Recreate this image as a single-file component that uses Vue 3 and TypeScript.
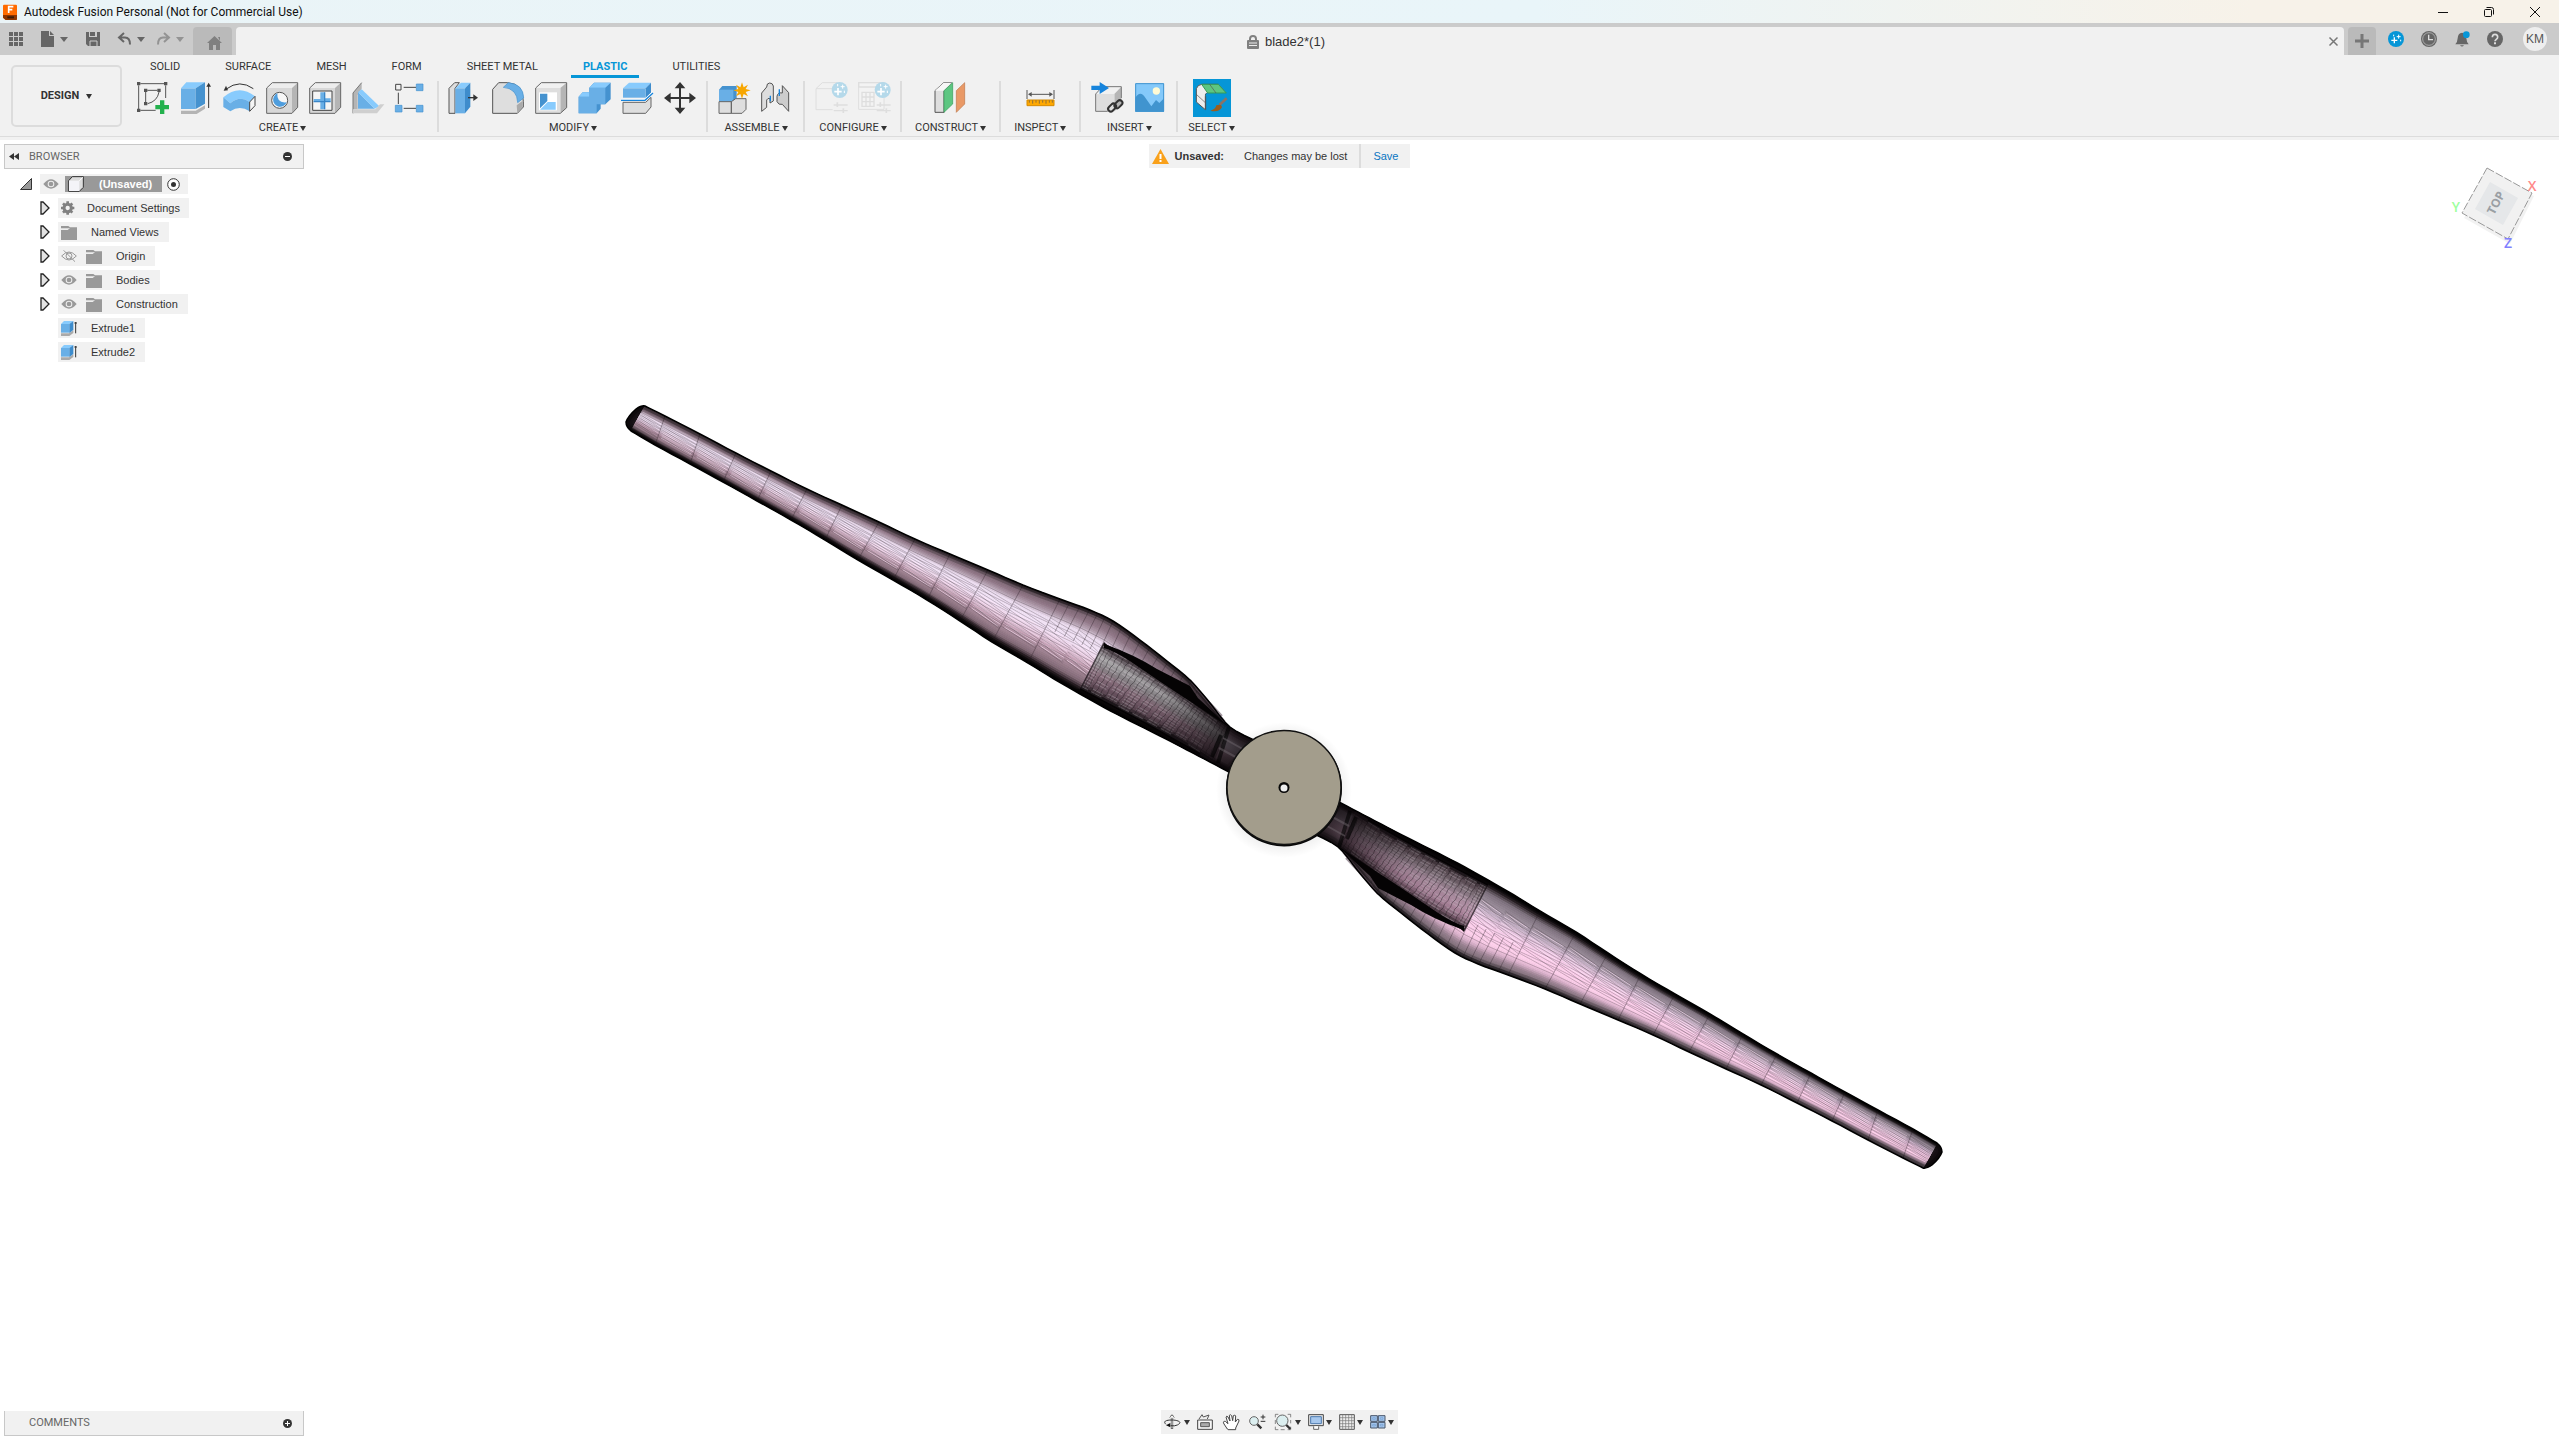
<script setup lang="ts">
interface RibbonGroup {
  label: string
  icons: string[]
  wide?: boolean
  muted?: boolean
}
interface TreeRow {
  label: string
  icons: string[]
  expandable: boolean
}
type Pt = [number, number]
type Stop = [number, string]

const tabs: string[] = ['SOLID', 'SURFACE', 'MESH', 'FORM', 'SHEET METAL', 'PLASTIC', 'UTILITIES']

const groups: RibbonGroup[] = [
  { label: 'CREATE', icons: ['sketch', 'extrude', 'snap', 'boss', 'rest', 'web', 'pattern'] },
  { label: 'MODIFY', icons: ['press', 'fillet', 'shell', 'combine', 'split', 'move'] },
  { label: 'ASSEMBLE', icons: ['component', 'joint'] },
  { label: 'CONFIGURE', icons: ['configModel', 'configTable'], muted: true },
  { label: 'CONSTRUCT', icons: ['plane'], wide: true },
  { label: 'INSPECT', icons: ['measure'], wide: true },
  { label: 'INSERT', icons: ['derive', 'image'] },
  { label: 'SELECT', icons: ['select'] },
]

const rows: TreeRow[] = [
  { label: 'Document Settings', icons: ['gear'], expandable: true },
  { label: 'Named Views', icons: ['folder'], expandable: true },
  { label: 'Origin', icons: ['eyeOff', 'folder'], expandable: true },
  { label: 'Bodies', icons: ['eye', 'folder'], expandable: true },
  { label: 'Construction', icons: ['eye', 'folder'], expandable: true },
  { label: 'Extrude1', icons: ['extrudeSmall'], expandable: false },
  { label: 'Extrude2', icons: ['extrudeSmall'], expandable: false },
]

const navTools: { icon: string; label: string; menu: boolean }[] = [
  { icon: 'orbit', label: 'Orbit', menu: true },
  { icon: 'look', label: 'Look at', menu: false },
  { icon: 'pan', label: 'Pan', menu: false },
  { icon: 'zoom', label: 'Zoom', menu: false },
  { icon: 'fit', label: 'Fit', menu: true },
  { icon: 'display', label: 'Display settings', menu: true },
  { icon: 'grid', label: 'Grid and snaps', menu: true },
  { icon: 'views', label: 'Viewports', menu: true },
]

const sparkle = (x: number, y: number) =>
  `<circle cx="${x}" cy="${y}" r="24" fill="#b5d9ea"/><path d="M${x - 5} ${y - 6}v22M${x - 16} ${y + 5}h22" stroke="#fff" stroke-width="5"/><path d="M${x + 9} ${y - 16}v12M${x + 3} ${y - 10}h12M${x - 6} ${y - 18}v7M${x + 14} ${y + 2}v7" stroke="#fff" stroke-width="3"/>`
const sliders = '<path d="M56 72h42M56 89h42" stroke="#dedede" stroke-width="4"/><path d="M67 64v14M85 82v14" stroke="#dedede" stroke-width="5"/>'

const big: Record<string, string> = {
  sketch:
    '<g fill="none" stroke="#555" stroke-width="3"><path d="M10 8h71M5 13v71M86 13v38M10 88h46M26 33v31M31 28h30M66 33q-5 28-34 35"/></g><g fill="#555"><path d="M0 3h10v10H0zM81 3h10v10H81zM0 83h10v10H0zM21 23h10v10H21zM61 23h10v10H61zM21 63h10v10H21z"/></g><path d="M69 58h13v14h14v13H82v14H69V85H55V72h14z" fill="#23b14d"/>',
  extrude:
    '<path d="M3 89h44l28-16v10L50 99H3z" fill="#b4b4b4"/><path d="M3 22h44v62H3z" fill="#69afe6"/><path d="M3 22 19 4h56L47 22z" fill="#88cbfd"/><path d="M47 22 75 4v64L47 84z" fill="#4592cf"/><path d="M86 81V12" stroke="#333" stroke-width="3"/><path d="M79 17h14L86 5z" fill="#333"/>',
  snap:
    '<path d="M10 24Q50-6 91 23" fill="none" stroke="#333" stroke-width="3"/><path d="m2 29 13-1-6-14z" fill="#333"/><path d="M1 49Q48 8 96 46L80 63Q50 42 22 67z" fill="#88cbfd"/><path d="M1 49 22 67v24L1 78zM22 67q28-25 58-4v28q-30-20-58 0z" fill="#69afe6"/><path d="M80 63 96 46v28L80 91z" fill="#f5f5f5" stroke="#444" stroke-width="3"/>',
  boss:
    '<path d="M2 21 19 5h76L78 21z" fill="#ededed"/><path d="M78 21 95 5v74L78 97z" fill="#b5b5b5"/><path d="M2 21h76v76H2z" fill="#d8d8d8"/><path d="M2 97V21L19 5h76v74L78 97z" fill="none" stroke="#666" stroke-width="3"/><circle cx="41" cy="58" r="24" fill="#f7f7f7" stroke="#555" stroke-width="3"/><path d="M34 37q-2 31 28 27a21 21 0 1 1-28-27" fill="#4e9ddd"/>',
  rest:
    '<path d="M2 21 19 5h76L78 21z" fill="#ededed"/><path d="M78 21 95 5v74L78 97z" fill="#b5b5b5"/><path d="M2 21h76v76H2z" fill="#d8d8d8"/><path d="M2 97V21L19 5h76v74L78 97z" fill="none" stroke="#666" stroke-width="3"/><path d="M11 30h58v58H11z" fill="#f5f5f5" stroke="#444" stroke-width="3"/><path d="M34 34h13v18h18v9H47v24H34V63H14v-9h20z" fill="#69afe6"/><path d="M47 34v51M14 62h51" stroke="#3985c7" stroke-width="4"/>',
  web:
    '<path d="M3 36 29 5v18L17 42v43H3z" fill="#b5b5b5"/><path d="M3 97V36L29 5" fill="none" stroke="#777" stroke-width="3"/><path d="M18 33v50h50z" fill="#69afe6"/><path d="m18 33 11-8 53 51-14 7z" fill="#88cbfd"/><path d="M3 97V85h67l14-15h13L75 97z" fill="#cfcfcf"/>',
  pattern:
    '<g fill="none" stroke="#444" stroke-width="3"><path d="M2 10h16v17H2zM26 19h37M10 35v34M26 82h37"/></g><path d="M64 9h20v20H64zM1 73h20v20H1zM64 73h20v20H64z" fill="#69afe6" stroke="#4592cf" stroke-width="2"/>',
  press:
    '<path d="M0 22 17 5h14L18 22v75H0z" fill="#dedede" stroke="#555" stroke-width="3"/><path d="M19 22 36 5h28L48 22z" fill="#88cbfd"/><path d="M48 22 64 5v72L48 97z" fill="#3e8ccc"/><path d="M19 22h29v75H19z" fill="#69afe6"/><path d="M57 50h20" stroke="#333" stroke-width="4"/><path d="m73 40 14 10-14 10z" fill="#333"/>',
  fillet:
    '<path d="M2 97V25L20 5h27q47 3 47 56v17L76 97z" fill="#dedede" stroke="#555" stroke-width="3"/><path d="M74 73l18-14v18L76 96z" fill="#aaa"/><path d="M34 19 49 5q45 4 46 46L77 65Q76 23 34 19" fill="#69afe6" stroke="#4592cf" stroke-width="2"/>',
  shell:
    '<path d="M2 21 19 5h76L76 21z" fill="#f1f1f1"/><path d="M76 21 95 5v75L76 97z" fill="#b5b5b5"/><path d="M2 21h74v76H2z" fill="#dedede"/><path d="M2 97V21L19 5h76v75L76 97z" fill="none" stroke="#666" stroke-width="3"/><path d="M12 34h54v54H12z" fill="#fff"/><path d="M15 38h22v22L15 82z" fill="#4592cf"/><path d="M15 86 38 63h24v23z" fill="#88cbfd"/>',
  combine:
    '<path d="M2 47 14 34h20V20L48 5h50v50L82 70H68v13L56 97H2z" fill="#4592cf"/><path d="M2 47h32V20h48v50H56v27H2z" fill="#69afe6"/><path d="m2 47 12-13h20v13zM34 20 48 5h50L82 20z" fill="#88cbfd"/>',
  split:
    '<path d="M6 22 24 5h66L74 22z" fill="#88cbfd"/><path d="m74 22 16-17v31L74 51z" fill="#3e8ccc"/><path d="M6 22h68v28H6z" fill="#69afe6"/><path d="M6 97V64h68l16-15v29L74 97z" fill="#dedede" stroke="#666" stroke-width="3"/><path d="M0 53h71l24-23v7L72 60H0z" fill="#fff"/><path d="M0 58h72l24-22" fill="none" stroke="#1684dc" stroke-width="4"/>',
  move:
    '<path d="M48 15v70M13 51h70" stroke="#333" stroke-width="6"/><path d="m48 3-16 19h32zM48 99 32 80h32zM0 51l20-16v32zM96 51 76 35v32z" fill="#333"/>',
  component:
    '<path d="M3 26 13 15h43v35L46 62H3z" fill="#4592cf"/><path d="M3 26h43v35H3z" fill="#69afe6"/><path d="M3 62h37v35H3zM40 62l13-9h31v32L72 97H40z" fill="#dedede" stroke="#666" stroke-width="3"/><path d="m72 4 5 15 13-8-7 13 15 4-15 5 7 13-13-7-5 14-5-14-13 7 7-13-15-5 15-4-7-13 13 8z" fill="#f7a600"/>',
  joint:
    '<path d="M2 36 17 18q0-12 9-12t11 9v45L27 66V53q-7-3-10 4v22L2 91z" fill="#ddd" stroke="#555" stroke-width="3"/><path d="M83 35 64 14v22q-14-3-16 10v16q5 11 16 8l19 21z" fill="#ccc" stroke="#555" stroke-width="3"/><path d="M28 44v17M55 25v20" stroke="#1684dc" stroke-width="4"/>',
  configModel:
    '<path d="M3 23 22 5h52M3 23v63h50M3 23h50" fill="none" stroke="#dedede" stroke-width="3"/>' + sliders + sparkle(74, 27),
  configTable:
    '<path d="M2 5h76v80H2z" fill="#f3f3f3" stroke="#dedede" stroke-width="3"/><path d="M2 5h76v13H2zM12 34h36v42H12zM24 34v42M36 34v42M12 48h36M12 62h36" fill="none" stroke="#dedede" stroke-width="4"/>' + sliders + sparkle(74, 27),
  plane:
    '<path d="M3 29 29 5h24L30 29v65H3z" fill="#dedede" stroke="#555" stroke-width="3"/><path d="M3 29 29 5h24L30 29z" fill="#f7f7f7"/><path d="M30 29 56 5v64L30 94z" fill="#5dc681" stroke="#339b58" stroke-width="2"/><path d="M67 29 92 5v64L67 94z" fill="#e99966" stroke="#bd7549" stroke-width="2"/>',
  measure:
    '<path d="M9 27v27M90 27v27M17 40h66" stroke="#555" stroke-width="3"/><path d="m12 40 11-7v14zM87 40 76 33v14z" fill="#555"/><path d="M9 57h81v17H9z" fill="#ffa800" stroke="#d58a00" stroke-width="3"/><path d="M16 58v7M26 58v10M36 58v7M46 58v10M56 58v7M66 58v10M76 58v7M85 58v7" stroke="#555" stroke-width="2"/>',
  derive:
    '<path d="M14 39 35 17h56L70 39z" fill="#f1f1f1"/><path d="m70 39 21-22v56L70 91z" fill="#b5b5b5"/><path d="M14 39h56v52H14z" fill="#dedede"/><path d="M14 91V39l20-22h57v34M14 91h36" fill="none" stroke="#777" stroke-width="3"/><path d="M1 14h25V3l28 18-28 18V27H1z" fill="#1684dc"/><g fill="none" stroke="#333" stroke-width="6"><rect x="50" y="72" width="27" height="16" rx="8" transform="rotate(-45 63 80)"/><rect x="69" y="62" width="27" height="16" rx="8" transform="rotate(-45 82 70)"/></g>',
  image:
    '<path d="M4 7h86v85H4z" fill="#84c9fa"/><circle cx="67" cy="30" r="11" fill="#fffbd5"/><path d="M4 50q15-24 30 0l18 26 14-19 10 9 14-14v40H4z" fill="#4094cf"/><path d="M5 8h84v83H5z" fill="none" stroke="#4094cf" stroke-width="3"/>',
  select:
    '<path d="M0 0h114v114H0z" fill="#0696d7"/><path d="M10 29q4-12 16-13h50l22 26H43q-8 0-6 12v38L10 69z" fill="#eee" stroke="#555" stroke-width="3"/><path d="M38 92V54q-2-12 8-12h54v50z" fill="#0696d7"/><path d="M38 92V52" stroke="#555" stroke-width="3"/><path d="m26 16 18 26h56L76 16z" fill="#5dc681" stroke="#339b58" stroke-width="3"/><path d="m50 16 19 26M10 46l27 25" stroke="#555" stroke-width="2"/><path d="M101 58 80 77" stroke="#8b7265" stroke-width="8"/><path d="M52 95q15-3 18-16 16-6 17 6-9 16-35 10" fill="#9b5d1e"/>',
}

const small: Record<string, string> = {
  eye: '<path d="M1 24Q24-4 47 24 24 52 1 24" fill="#999"/><circle cx="24" cy="24" r="10" fill="#eee"/><circle cx="24" cy="24" r="7" fill="#999"/>',
  eyeOff:
    '<path d="M2 24Q24 0 46 24 24 48 2 24" fill="none" stroke="#999" stroke-width="3"/><circle cx="24" cy="24" r="9" fill="none" stroke="#999" stroke-width="3"/><path d="m8 7 34 34" stroke="#999" stroke-width="3"/>',
  folder: '<path d="M0 13V6h22l5 4h21v38H0V18h20l7-5z" fill="#999"/><path d="M2 14h20" stroke="#d5d5d5" stroke-width="2"/>',
  gear:
    '<circle cx="20" cy="24" r="11" fill="none" stroke="#808080" stroke-width="9"/><path d="M20 4v8M20 36v8M0 24h8M32 24h8M6 10l6 6M28 32l6 6M34 10l-6 6M12 32l-6 6" stroke="#808080" stroke-width="8"/>',
  extrudeSmall:
    '<path d="M0 40h24l13-9v8L25 48H0z" fill="#aaa"/><path d="M0 12h25v26H0z" fill="#69afe6"/><path d="M0 12 9 3h28L25 12z" fill="#88cbfd"/><path d="M25 12 37 3v27l-12 9z" fill="#3e8ccc"/><path d="M44 40V6M40 9h8" stroke="#333" stroke-width="3"/>',
  orbit:
    '<path d="M24 3v42" stroke="#555" stroke-width="7"/><path d="M24 7v36" stroke="#ddd" stroke-width="3"/><path d="M17 11 24 2l7 9" fill="#fff" stroke="#444" stroke-width="2"/><path d="M6 31C-6 20 12 18 24 18s36 5 16 15q-8 4-20 2" fill="none" stroke="#333" stroke-width="3"/><path d="m6 34 13-7v13z" fill="#111"/>',
  look: '<path d="m6 15 9-13 4 7 17-6-5 12" fill="#eee" stroke="#555" stroke-width="3"/><path d="M2 18h44v28H2z" fill="#f6f6f6" stroke="#444" stroke-width="3"/><path d="M11 26h26v12H11z" fill="#aaa" stroke="#555" stroke-width="3"/>',
  pan: '<path d="M13 45 3 30q-5-9 4-8l8 7L9 9q2-5 6 0l6 12-2-17q4-4 7 1l3 15 2-15q5-4 7 1l-1 18 6-8q6-1 5 5L38 42v5H15z" fill="#fff" stroke="#444" stroke-width="3"/>',
  zoom: '<circle cx="15" cy="21" r="13" fill="#dceff0" stroke="#666" stroke-width="3"/><path d="m25 31 12 12" stroke="#333" stroke-width="7"/><path d="M42 2v14M35 9h14M35 22h14" stroke="#333" stroke-width="3"/>',
  fit: '<path d="M1 10V1h9M38 1h9v9M47 38v9h-9M10 47H1v-9M1 18v12M47 18v10M17 47h12" fill="none" stroke="#555" stroke-width="2"/><circle cx="22" cy="20" r="17" fill="#dceff0" stroke="#666" stroke-width="3"/><path d="m34 33 12 12" stroke="#333" stroke-width="7"/>',
  display: '<path d="M2 2h44v33H2z" fill="#eee" stroke="#444" stroke-width="3"/><path d="M8 8h32v21H8z" fill="#a7c8ee" stroke="#4c79ae" stroke-width="3"/><path d="M17 37v9h15v-9" fill="#fff" stroke="#666" stroke-width="3"/>',
  grid: '<path d="M2 2h44v44H2z" fill="#eee" stroke="#555" stroke-width="3"/><path d="M11 2v44M20 2v44M29 2v44M38 2v44M2 11h44M2 20h44M2 29h44M2 38h44" stroke="#777" stroke-width="2"/>',
  views: '<path d="M2 5h20v17H2zM25 5h20v17H25zM2 25h20v17H2zM25 25h20v17H25z" fill="#a7c8ee" stroke="#48566b" stroke-width="3"/><path d="M8 11h8v5H8zM31 11h8v5h-8zM8 31h8v5H8zM31 31h8v5h-8z" fill="none" stroke="#6f9bcf" stroke-width="2"/>',
}

/* Propeller blade: stations from tip to root, each with a trailing and a leading edge point. */
const stations: [Pt, Pt][] = [
  [[645, 406], [631, 431]], [[665, 416], [655, 445]], [[700, 434], [690, 464]], [[736, 453], [723, 482]],
  [[771, 471], [757, 501]], [[807, 489], [791, 520]], [[842, 505], [825, 540]], [[879, 522], [858, 560]],
  [[915, 539], [893, 580]], [[950, 554], [927, 600]], [[988, 570], [960, 621]], [[1023, 585], [992, 642]],
  [[1060, 599], [1028, 663]], [[1090, 610], [1054, 679]], [[1113, 621], [1080, 694]], [[1140, 640], [1105, 708]],
  [[1167, 661], [1130, 721]], [[1190, 680], [1160, 736]], [[1210, 703], [1187, 750]], [[1230, 727], [1210, 762]],
  [[1256, 741], [1229, 772]],
]
const pocket: [Pt, Pt][] = [
  [[1104, 643], [1080, 689]], [[1140, 664], [1110, 705]], [[1175, 687], [1145, 723]],
  [[1203, 708], [1180, 742]], [[1230, 728], [1213, 763]],
]

function spline(p: Pt[], u: number): Pt {
  const i = Math.min(Math.floor(u), p.length - 2)
  const t = u - i
  const at = (k: number) => p[Math.max(0, Math.min(p.length - 1, k))]
  const mix = (c: 0 | 1) => {
    const a = at(i - 1)[c], b = at(i)[c], d = at(i + 1)[c], e = at(i + 2)[c]
    return 0.5 * (2 * b + (d - a) * t + (2 * a - 5 * b + 4 * d - e) * t * t + (3 * b - a - 3 * d + e) * t * t * t)
  }
  return [mix(0), mix(1)]
}
function surface(s: [Pt, Pt][], u: number, f: number): Pt {
  const a = spline(s.map((x) => x[0]), u)
  const b = spline(s.map((x) => x[1]), u)
  return [a[0] + (b[0] - a[0]) * f, a[1] + (b[1] - a[1]) * f]
}
const fmt = (p: Pt) => p[0].toFixed(1) + ' ' + p[1].toFixed(1)
function run(s: [Pt, Pt][], f: number): Pt[] {
  const out: Pt[] = []
  const n = (s.length - 1) * 4
  for (let k = 0; k <= n; k++) out.push(surface(s, k / 4, f))
  return out
}
function tint(stops: Stop[], f: number): string {
  let i = 0
  while (i < stops.length - 2 && f > stops[i + 1][0]) i++
  const [fa, a] = stops[i]
  const [fb, b] = stops[i + 1]
  const t = Math.max(0, Math.min(1, (f - fa) / (fb - fa)))
  const ch = (c: string, k: number) => parseInt(c.slice(1 + k * 2, 3 + k * 2), 16)
  return 'rgb(' + [0, 1, 2].map((k) => Math.round(ch(a, k) + (ch(b, k) - ch(a, k)) * t)).join(',') + ')'
}
function bands(s: [Pt, Pt][], stops: Stop[], n: number) {
  return Array.from({ length: n }, (_, k) => ({
    d: 'M' + [...run(s, k / n), ...run(s, (k + 1) / n).reverse()].map(fmt).join('L') + 'Z',
    fill: tint(stops, (k + 0.5) / n),
  }))
}

const outline =
  'M' + run(stations, 0).map(fmt).join('L') + 'L' + run(stations, 1).reverse().map(fmt).join('L') +
  'Q626 427 626 422Q628 416 636 409Q642 405 645 406Z'
const pocketOutline = 'M' + [...run(pocket, 0), ...run(pocket, 1).reverse()].map(fmt).join('L') + 'Z'

let chords = ''
for (let i = 1; i < 13; i++) chords += `M${fmt(surface(stations, i, 0))}L${fmt(surface(stations, i, 1))}`
for (let i = 0; i < 16; i++) chords += `M${fmt(surface(stations, 12.3 + i * 0.34, 0))}L${fmt(surface(stations, 12.3 + i * 0.34, 0.45))}`

let facets = ''
for (let i = 0; i < 15; i++) {
  for (let k = 0; k < 14; k++) {
    const f = 0.26 + k * 0.035
    facets += `M${fmt(surface(stations, i, f))}L${fmt(surface(stations, i + 1, f + (k % 3) * 0.05))}`
  }
}
let gleams = ''
for (let i = 1; i < 14; i++) {
  for (let k = 0; k < 7; k++) {
    const f = 0.44 + k * 0.045
    gleams += `M${fmt(surface(stations, i + 0.1, f))}L${fmt(surface(stations, i + 0.95, f + 0.03))}`
  }
}

let hatch = ''
for (let i = 1; i < 32; i++) {
  const u = (i / 32) * 4
  for (let k = 0; k < 12; k++) {
    const shift = ((i + k) % 2) * 0.025
    hatch += `${k ? 'L' : 'M'}${fmt(surface(pocket, Math.min(4, u + shift), k / 11))}`
  }
}
let grain = ''
for (let k = 1; k < 17; k++) {
  const f = k / 17
  for (let i = 0; i < 7; i++) {
    const a = ((i * 5 + k * 3) % 9) * 0.4
    grain += `M${fmt(surface(pocket, a, f))}L${fmt(surface(pocket, Math.min(4, a + 0.3), f))}`
  }
}

const coolStops: Stop[] = [
  [0, '#2b2126'], [0.06, '#78636f'], [0.16, '#927989'], [0.24, '#b5a1b1'], [0.31, '#eedff2'], [0.46, '#f5e6fa'],
  [0.57, '#e6cadf'], [0.66, '#c9a5b9'], [0.73, '#a88a9a'], [0.86, '#846c79'], [0.93, '#33272d'], [1, '#000000'],
]
const warmStops: Stop[] = [
  [0, '#2b2429'], [0.06, '#7a6b75'], [0.15, '#9d8494'], [0.22, '#dbb2cc'], [0.3, '#fed1ec'], [0.46, '#fed1ee'],
  [0.57, '#e6c5e0'], [0.66, '#c1aec3'], [0.73, '#a092a0'], [0.86, '#807480'], [0.93, '#33292f'], [1, '#000000'],
]
const coolPocket: Stop[] = [
  [0, '#1b1519'], [0.12, '#5c5158'], [0.28, '#aaa8aa'], [0.42, '#8c878b'], [0.6, '#8a6f7e'], [0.85, '#5f4a56'], [1, '#0c090b'],
]
const warmPocket: Stop[] = [
  [0, '#1b1519'], [0.14, '#6d5362'], [0.3, '#b088a0'], [0.5, '#b091a5'], [0.7, '#82747d'], [0.88, '#584850'], [1, '#0c090b'],
]
const blades = [
  { turn: 'rotate(0)', skin: bands(stations, coolStops, 40), inset: bands(pocket, coolPocket, 16) },
  { turn: 'rotate(180 1284 787)', skin: bands(stations, warmStops, 40), inset: bands(pocket, warmPocket, 16) },
]
</script>

<template>
  <div class="app">
    <header class="titlebar">
      <svg class="logo" viewBox="0 0 42 48" aria-hidden="true">
        <path d="M3 2h36q3 0 3 3v40q0 3-3 3H8L0 41V5q0-3 3-3" fill="#ff6b00" />
        <path d="M0 33h42v12q0 3-3 3H8L0 41z" fill="#8d3500" />
        <path d="M17 27V8h14M17 17h11" fill="none" stroke="#fff" stroke-width="5" />
        <path d="M13 37h20v6H13z" fill="#3b1b08" />
      </svg>
      <h1>Autodesk Fusion Personal (Not for Commercial Use)</h1>
      <div class="window-controls">
        <button aria-label="Minimize"><svg viewBox="0 0 10 10"><path d="M0 5.5h10" /></svg></button>
        <button aria-label="Restore"><svg viewBox="0 0 10 10"><rect x=".5" y="2.5" width="7" height="7" rx="1" /><path d="M2.5 .5h5q2 0 2 2v5" /></svg></button>
        <button aria-label="Close"><svg viewBox="0 0 10 10"><path d="m0 0 10 10M10 0 0 10" /></svg></button>
      </div>
    </header>

    <div class="docbar">
      <div class="quick">
        <button aria-label="Data panel"><svg width="14" height="14" viewBox="0 0 14 14" fill="#666"><path d="M0 0h4v4H0zM5 0h4v4H5zM10 0h4v4h-4zM0 5h4v4H0zM5 5h4v4H5zM10 5h4v4h-4zM0 10h4v4H0zM5 10h4v4H5zM10 10h4v4h-4z" /></svg></button>
        <button class="file" aria-label="File"><svg width="13" height="16" viewBox="0 0 13 16"><path d="M0 0h8v5h5v11H0z" fill="#666" /><path d="m9 0 4 4H9z" fill="#666" /></svg><i class="caret big-caret"></i></button>
        <button class="save" aria-label="Save file"><svg width="14" height="14" viewBox="0 0 14 14"><path d="M0 0h14v14H2l-2-2z" fill="#666" /><path d="M3 0h8v5H3z" fill="#ccc" /><path d="M4 0h5v4H4zM4 9h7v5H4z" fill="#666" /><path d="M4 14V9h7v5" fill="none" stroke="#ccc" /></svg></button>
        <button aria-label="Undo"><svg width="13" height="12" viewBox="0 0 13 12"><path d="M6 0 1 4.500 6 9M1 4.500h6q5 0 5 7" fill="none" stroke="#666" stroke-width="2" /></svg><i class="caret big-caret"></i></button>
        <button class="faded" aria-label="Redo"><svg width="13" height="12" viewBox="0 0 13 12"><path d="m7 0 5 4.500L7 9M12 4.500H6q-5 0-5 7" fill="none" stroke="#666" stroke-width="2" /></svg><i class="caret big-caret"></i></button>
      </div>
      <button class="home" aria-label="Home"><svg width="15" height="14" viewBox="0 0 15 14"><path d="m7.500 0 7.500 7h-2v7H9V9H6v5H2V7H0z" fill="#808080" /><path d="M11 1h2v4" fill="#808080" /></svg></button>
      <div class="doc">
        <span class="doc-name">
          <svg width="12" height="14" viewBox="0 0 12 14"><path d="M3 6V4q0-3 3-3t3 3v2" fill="none" stroke="#808080" stroke-width="2" /><rect y="5" width="12" height="9" rx="1" fill="#808080" /><path d="M2 8h8M2 10.500h8" stroke="#eee" /></svg>
          blade2*(1)
        </span>
        <button class="close-doc" aria-label="Close document"><svg width="9" height="9" viewBox="0 0 9 9"><path d="m.5.5 8 8M8.500.5l-8 8" stroke="#777" stroke-width="1.500" /></svg></button>
      </div>
      <button class="new-doc" aria-label="New design"><svg width="14" height="14" viewBox="0 0 14 14"><path d="M7 0v14M0 7h14" stroke="#777" stroke-width="3" /></svg></button>
      <div class="status">
        <button aria-label="Extensions"><svg viewBox="0 0 48 48"><circle cx="24" cy="24" r="24" fill="#0696d7" /><path d="M19 19v18M10 28h18" stroke="#fff" stroke-width="4" /><path d="M32 11v12M26 17h12M17 11v5M38 26v5" stroke="#fff" stroke-width="3" /></svg></button>
        <button aria-label="Job status"><svg viewBox="0 0 48 48"><circle cx="24" cy="24" r="24" fill="#666" /><circle cx="24" cy="24" r="19" fill="none" stroke="#ccc" stroke-width="2" /><path d="M23 11v15h13" fill="none" stroke="#ddd" stroke-width="4" /></svg></button>
        <button aria-label="Notifications"><svg viewBox="0 0 48 48"><path d="M4 40q6-5 7-18Q12 6 24 5q12 1 13 17 1 13 7 18z" fill="#666" /><path d="M18 43h12q-6 7-12 0" fill="#666" /><circle cx="37" cy="11" r="10" fill="#0696d7" /></svg></button>
        <button aria-label="Help"><svg viewBox="0 0 48 48"><circle cx="24" cy="24" r="24" fill="#666" /><path d="M16 19q0-9 8-9t8 8q0 5-4 7-4 3-4 6" fill="none" stroke="#ddd" stroke-width="5" /><path d="M21 34h6v6h-6z" fill="#ddd" /></svg></button>
        <button class="avatar">KM</button>
      </div>
    </div>

    <section class="ribbon">
      <button class="design">DESIGN <i class="caret"></i></button>
      <div class="ribbon-main">
        <nav class="tabs">
          <a v-for="t in tabs" :key="t" href="#" :class="{ active: t === 'PLASTIC' }">{{ t }}</a>
        </nav>
        <div class="groups">
          <div v-for="g in groups" :key="g.label" class="group" :class="{ wide: g.wide }">
            <div class="tools">
              <button v-for="i in g.icons" :key="i" :disabled="g.muted" :aria-label="i" :class="{ chosen: i === 'select' }">
                <svg :viewBox="i === 'select' ? '0 0 114 114' : '0 0 99 99'" v-html="big[i]"></svg>
              </button>
            </div>
            <button class="group-label">{{ g.label }} <i class="caret"></i></button>
          </div>
        </div>
      </div>
    </section>

    <main class="workspace">
      <svg class="model" viewBox="0 140 2559 1299" role="img" aria-label="Propeller, top view">
        <defs>
          <clipPath id="blade-clip"><path :d="outline" /></clipPath>
          <clipPath id="pocket-clip"><path :d="pocketOutline" /></clipPath>
          <linearGradient id="root-shade" gradientUnits="userSpaceOnUse" x1="1090" y1="670" x2="1240" y2="756">
            <stop offset="0" stop-color="#000" stop-opacity="0" />
            <stop offset=".45" stop-color="#0c070a" stop-opacity=".12" />
            <stop offset=".85" stop-color="#0c070a" stop-opacity=".7" />
            <stop offset="1" stop-color="#0c070a" stop-opacity=".85" />
          </linearGradient>
          <radialGradient id="hub-shade">
            <stop offset=".85" stop-color="#000" stop-opacity=".05" />
            <stop offset="1" stop-color="#000" stop-opacity="0" />
          </radialGradient>
        </defs>
        <circle cx="1284" cy="790" r="68" fill="url(#hub-shade)" />
        <g v-for="b in blades" :key="b.turn" :transform="b.turn">
          <path :d="outline" fill="#1a1317" />
          <g clip-path="url(#blade-clip)">
            <path v-for="(s, n) in b.skin" :key="n" :d="s.d" :fill="s.fill" :stroke="s.fill" />
            <path :d="gleams" fill="none" stroke="#ffe6f8" stroke-opacity=".6" stroke-width="1" />
            <path :d="facets" fill="none" stroke="#3a2f37" stroke-opacity=".34" stroke-width=".8" />
            <path :d="chords" fill="none" stroke="#2a2026" stroke-opacity=".45" stroke-width=".8" />
            <path d="M1080 689 1145 723 1213 763 1240 785 1213 775 1113 722 1060 690z" fill="#0a0709" fill-opacity=".7" />
            <path d="M625 400h18l-8 14-6 22h-10z" fill="#1b1317" fill-opacity=".6" />
            <path :d="outline" fill="none" stroke="#000" stroke-opacity=".2" stroke-width="12" />
            <path :d="outline" fill="none" stroke="#000" stroke-opacity=".35" stroke-width="7" />
          </g>
          <g clip-path="url(#pocket-clip)">
            <path v-for="(s, n) in b.inset" :key="n" :d="s.d" :fill="s.fill" :stroke="s.fill" />
            <path :d="grain" fill="none" stroke="#cfc4cb" stroke-opacity=".35" stroke-width="1.200" />
            <path :d="hatch" fill="none" stroke="#1a1418" stroke-opacity=".5" stroke-width=".8" />
          </g>
          <path :d="outline" fill="url(#root-shade)" />
          <path d="M1104 642 1107 645Q1135 655 1157 669L1190 686 1198 698 1230 728 1194 704Q1160 682 1130 661 1117 652 1104 648z" fill="#050304" />
          <path d="M1104 643 1080 690" stroke="#1a1418" stroke-width="1.500" stroke-opacity=".7" />
          <path d="M1080 689 1145 723 1200 754" fill="none" stroke="#050304" stroke-width="1.500" />
          <path d="M1190 680 1225 722M1196 688 1222 716" stroke="#665460" stroke-opacity=".6" stroke-width="2" />
          <path d="M1221 735 1212 757M1229 727 1218 763" stroke="#000" stroke-opacity=".6" stroke-width="4" />
          <path d="M1223 738 1248 752M1219 748 1243 761" stroke="#6b646a" stroke-opacity=".5" stroke-width="2" />
          <path :d="outline" fill="none" stroke="#000" stroke-width="1.500" stroke-linejoin="round" />
        </g>
        <circle cx="1284" cy="788.500" r="58" fill="#080808" />
        <circle cx="1284" cy="787.500" r="57" fill="#a39d8c" stroke="#111" stroke-width="1.500" />
        <circle cx="1284" cy="787.500" r="5.500" fill="#080808" />
        <circle cx="1284" cy="788" r="3.500" fill="#eee" />
      </svg>

      <div class="top-row">
        <aside class="browser">
          <div class="panel">
            <svg width="10" height="7" viewBox="0 0 10 7"><path d="M5 0v7L0 3.500zM10 0v7L5 3.500z" fill="#333" /></svg>
            <span>BROWSER</span>
            <button aria-label="Collapse browser"><svg width="9" height="9" viewBox="0 0 9 9"><circle cx="4.500" cy="4.500" r="4.500" fill="#333" /><path d="M2 4.500h5" stroke="#fff" /></svg></button>
          </div>
          <ul class="tree">
            <li class="root">
              <svg class="arrow" width="12" height="12" viewBox="0 0 12 12"><path d="M11.500.5v11H.5z" fill="#999" stroke="#333" /></svg>
              <div class="cell">
                <svg class="ico" viewBox="0 0 48 48" v-html="small.eye"></svg>
                <span class="chip">
                  <svg class="ico" viewBox="0 0 48 48"><path d="M2 14 13 2h33v32L34 46H2z" fill="#ddd" stroke="#333" stroke-width="3" /><path d="M3 14h31v31H3z" fill="#f4f4f8" /><path d="M34 14 45 4" stroke="#fff" stroke-width="3" /></svg>
                  <b>(Unsaved)</b>
                </span>
                <svg class="radio" viewBox="0 0 13 13"><circle cx="6.500" cy="6.500" r="5.800" fill="#fff" stroke="#333" /><circle cx="6.500" cy="6.500" r="2.500" fill="#333" /></svg>
              </div>
            </li>
            <li v-for="r in rows" :key="r.label">
              <svg class="arrow" width="10" height="14" viewBox="0 0 10 14"><path v-if="r.expandable" d="M1 1h2l6 6-6 6H1z" fill="#e3e3e3" stroke="#222" stroke-width="1.300" /></svg>
              <div class="cell" :class="{ tight: r.icons[0] === 'gear' }">
                <svg v-for="i in r.icons" :key="i" class="ico" viewBox="0 0 48 48" v-html="small[i]"></svg>
                <span>{{ r.label }}</span>
              </div>
            </li>
          </ul>
        </aside>

        <div class="notice">
          <svg width="17" height="15" viewBox="0 0 17 15"><path d="M8.500 0 17 15H0z" fill="#f9a11b" /><path d="M8.500 5v5M8.500 11v2" stroke="#fff" stroke-width="2" /></svg>
          <b>Unsaved:</b>
          <span>Changes may be lost</span>
          <a href="#">Save</a>
        </div>

        <svg class="cube" width="90" height="90" viewBox="2450 160 90 90" role="img" aria-label="View cube">
          <path d="m2488 172 46 23-24 48-46-26z" fill="#000" fill-opacity=".05" />
          <path d="m2487 167 45 25-24 46-46-26z" fill="#f1f1f1" stroke="#999" stroke-dasharray="8 2" />
          <path d="m2490 181 28 16-15 27-28-16z" fill="#e5e7e9" />
          <text x="2496" y="206" transform="rotate(-62 2496 202)" class="face">TOP</text>
          <text x="2532" y="190" fill="#ff8a8a">X</text>
          <text x="2456" y="211" fill="#9dff9d">Y</text>
          <text x="2508" y="247" fill="#8080ff">Z</text>
        </svg>
      </div>

      <div class="bottom-row">
        <div class="panel comments">
          <span>COMMENTS</span>
          <button aria-label="Expand comments"><svg width="9" height="9" viewBox="0 0 9 9"><circle cx="4.500" cy="4.500" r="4.500" fill="#333" /><path d="M2 4.500h5M4.500 2v5" stroke="#fff" /></svg></button>
        </div>
        <div class="navbar">
          <button v-for="n in navTools" :key="n.icon" :aria-label="n.label" :class="{ menu: n.menu, spaced: n.icon === 'orbit' || n.icon === 'fit' }">
            <svg class="ico" viewBox="0 0 48 48" v-html="small[n.icon]"></svg>
            <i v-if="n.menu" class="caret"></i>
          </button>
        </div>
      </div>
    </main>
  </div>
</template>

<style>
body { margin: 0; }
</style>

<style scoped>
.app {
  display: flex;
  flex-direction: column;
  min-height: 100vh;
  font: 11px/16px "Liberation Sans", Arial, sans-serif;
  color: #333;
  background: #fff;
}
button { border: 0; padding: 0; margin: 0; background: none; font: inherit; color: inherit; display: flex; align-items: center; justify-content: center; }
svg { display: block; flex: none; overflow: visible; }
a { color: inherit; text-decoration: none; }

.titlebar { display: flex; align-items: center; height: 23px; box-sizing: border-box; padding: 0 19px 0 3px; background: linear-gradient(90deg, #eaf4f7 0%, #e9f5f9 60%, #f7f2e9 88%, #f7f2e9 100%); }
.logo { width: 14px; height: 16px; }
h1 { flex: 1; margin: 0 0 0 7px; font: 12px/20px Roboto, "Noto Sans", sans-serif; color: #111; }
.window-controls { display: flex; gap: 36px; }
.window-controls svg { width: 10px; height: 10px; fill: none; stroke: #111; }

.docbar { display: flex; align-items: flex-end; height: 32px; background: #cbcbcb; }
.quick { display: flex; align-self: center; gap: 12px; width: 184px; padding-left: 9px; }
.quick button { gap: 6px; }
.quick .file { margin-left: 6px; }
.quick .save { margin: 0 6px; }
.faded { opacity: .55; }
.caret { display: inline-block; width: 0; height: 0; border: 3px solid transparent; border-top: 5px solid #333; border-bottom: 0; }
.big-caret { border-width: 5px 4px 0; border-top-color: #666; }
.home { width: 39px; height: 28px; background: #bababa; border-radius: 4px 4px 0 0; padding: 3px 0 0 3px; box-sizing: border-box; }
.doc { flex: 1; display: flex; align-items: center; height: 28px; margin: 0 4px; background: #f1f1f1; border-radius: 4px 4px 0 0; }
.doc-name { flex: 1; display: flex; align-items: center; justify-content: center; gap: 6px; padding: 2px 0 0 14px; font-size: 13px; }
.close-doc { width: 22px; }
.new-doc { width: 28px; height: 28px; background: #bababa; border-radius: 4px 4px 0 0; }
.status { display: flex; align-self: center; align-items: center; gap: 17px; padding: 0 12px; }
.status svg { width: 16px; height: 16px; }
.status .avatar { width: 24px; height: 24px; margin-left: 3px; border-radius: 50%; background: #eee; font-size: 12px; color: #555; }

.ribbon { display: flex; height: 85px; box-sizing: border-box; padding: 0 0 0 11px; background: linear-gradient(#dcdcdc, #dcdcdc) 0 81px / 100% 1px no-repeat #f1f1f1; }
.design { width: 111px; height: 62px; margin-top: 10px; border: 2px solid #dcdcdc; border-radius: 5px; font-weight: bold; gap: 7px; box-sizing: border-box; }
.design, .tabs, .group-label { font-family: Roboto, "Liberation Sans", sans-serif; }
.tabs { display: flex; gap: 21px; padding-left: 16px; height: 23px; }
.tabs a { box-sizing: border-box; height: 23px; padding: 4px 12px 0; }
.tabs .active { color: #0696d7; font-weight: bold; border-bottom: 3px solid #0696d7; }
.groups { display: flex; margin-left: 5px; }
.group { display: flex; flex-direction: column; align-items: center; padding: 0 9px 0 10px; margin-top: 3px; height: 51px; border-left: 2px solid #dcdcdc; }
.group:first-child { border-color: transparent; padding-left: 8px; }
.group.wide { padding: 0 13px; }
.tools { display: flex; gap: 10px; height: 33px; align-items: center; }
.tools svg { width: 33px; height: 33px; }
.tools .chosen svg { width: 38px; height: 38px; }
.group-label { gap: 2px; margin-top: 6px; white-space: nowrap; }

.workspace { position: relative; flex: 1; display: flex; flex-direction: column; justify-content: space-between; }
.model { position: absolute; inset: 0; width: 100%; height: 100%; }
.top-row, .bottom-row { position: relative; display: grid; grid-template-columns: 1fr auto 1fr; align-items: start; padding: 4px 4px 3px; }
.panel { display: flex; align-items: center; box-sizing: border-box; width: 300px; height: 25px; border: 1px solid #c8c8c8; background: #f1f1f1; color: #666; padding: 0 11px 0 4px; gap: 10px; font-family: Roboto, sans-serif; }
.panel span { flex: 1; }
.comments { border-top: 0; padding-left: 24px; }
.tree { list-style: none; margin: 5px 0 0; padding: 0; display: flex; flex-direction: column; gap: 4px; }
.tree li { display: flex; align-items: center; gap: 8px; height: 20px; padding-left: 36px; }
.tree .root { padding-left: 16px; }
.cell { display: flex; align-items: center; height: 20px; padding: 0 10px 0 3px; gap: 9px; background: #f1f1f1; }
.cell > span:last-child { margin-left: 5px; }
.cell.tight { gap: 5px; padding-right: 9px; }
.ico { width: 16px; height: 16px; }
.root .cell { gap: 6px; padding-right: 8px; }
.root .chip { display: flex; align-items: center; gap: 15px; height: 16px; padding: 0 10px 0 3px; background: #999; color: #fff; }
.radio { width: 13px; height: 13px; margin-left: -1px; }

.notice { display: flex; align-items: center; height: 24px; padding-left: 3px; background: #f1f1f1; }
.notice b { margin: 0 20px 0 6px; }
.notice a { margin-left: 12px; padding: 0 12px; border-left: 2px solid #dcdcdc; line-height: 24px; color: #0a75c2; }
.cube { justify-self: end; margin: 17px 15px 0 0; font: 14px "Open Sans", sans-serif; text-anchor: middle; }
.cube text { font-weight: 600; }
.cube .face { font-size: 12px; font-weight: bold; fill: #9a9fa4; }

.bottom-row { align-items: end; }
.navbar { display: flex; align-items: center; height: 24px; padding: 0 4px 0 3px; gap: 7px; background: #f1f1f1; margin-bottom: 2px; }
.navbar button { padding-right: 3px; }
.navbar .menu { gap: 2px; padding: 0; }
.navbar .spaced { gap: 4px; }
</style>
